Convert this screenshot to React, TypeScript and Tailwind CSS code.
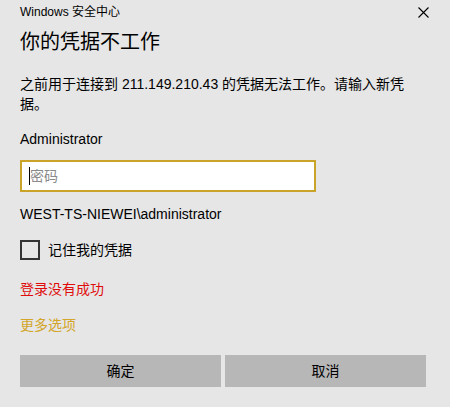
const font = "font-['Segoe_UI','Liberation_Sans','Noto_Sans_CJK_SC',sans-serif]";

function CloseIcon() {
  return (
    <svg width="11" height="11" viewBox="0 0 11 11" className="text-black">
      <path d="M0.5 0.5 L10.5 10.5 M10.5 0.5 L0.5 10.5" stroke="currentColor" strokeWidth="1.1" fill="none" />
    </svg>
  );
}

export default function App() {
  return (
    <div className={`${font} w-[450px] h-[407px] bg-[#e6e6e6] text-black pl-5 pr-6 overflow-hidden`}>
      {/* Title bar */}
      <div className="flex items-center justify-between h-6">
        <span className="text-[12px] leading-6">Windows 安全中心</span>
        <span className="mr-[-3px] flex items-center">
          <CloseIcon />
        </span>
      </div>

      <h1 className="mt-1 text-[20px] leading-7 font-normal">你的凭据不工作</h1>

      <p className="mt-[18px] text-[14px] leading-5">
        之前用于连接到 211.149.210.43 的凭据无法工作。请输入新凭
        <br />
        据。
      </p>

      <div className="mt-[15px] text-[14px] leading-5">Administrator</div>

      {/* Password field */}
      <div className="mt-[11px] w-[296px] h-8 bg-white border-2 border-[#caa32a] flex items-center pl-[7px]">
        <span className="w-px h-[18px] bg-black" />
        <span className="text-[14px] leading-5 text-[#8a8a8a]">密码</span>
      </div>

      <div className="mt-3 text-[14px] leading-5">WEST-TS-NIEWEI\administrator</div>

      {/* Remember checkbox */}
      <div className="mt-4 flex items-center gap-2 h-5">
        <span className="w-5 h-5 border-2 border-[#333333] bg-transparent" />
        <span className="text-[14px] leading-5">记住我的凭据</span>
      </div>

      <div className="mt-[19px] text-[14px] leading-5 text-[#e00b0b]">登录没有成功</div>

      <div className="mt-4 text-[14px] leading-5 text-[#d3a528]">更多选项</div>

      {/* Buttons */}
      <div className="mt-5 flex gap-1">
        <button className="w-[201px] h-8 bg-[#b7b7b7] text-[14px] text-black">确定</button>
        <button className="w-[201px] h-8 bg-[#b7b7b7] text-[14px] text-black">取消</button>
      </div>
    </div>
  );
}
